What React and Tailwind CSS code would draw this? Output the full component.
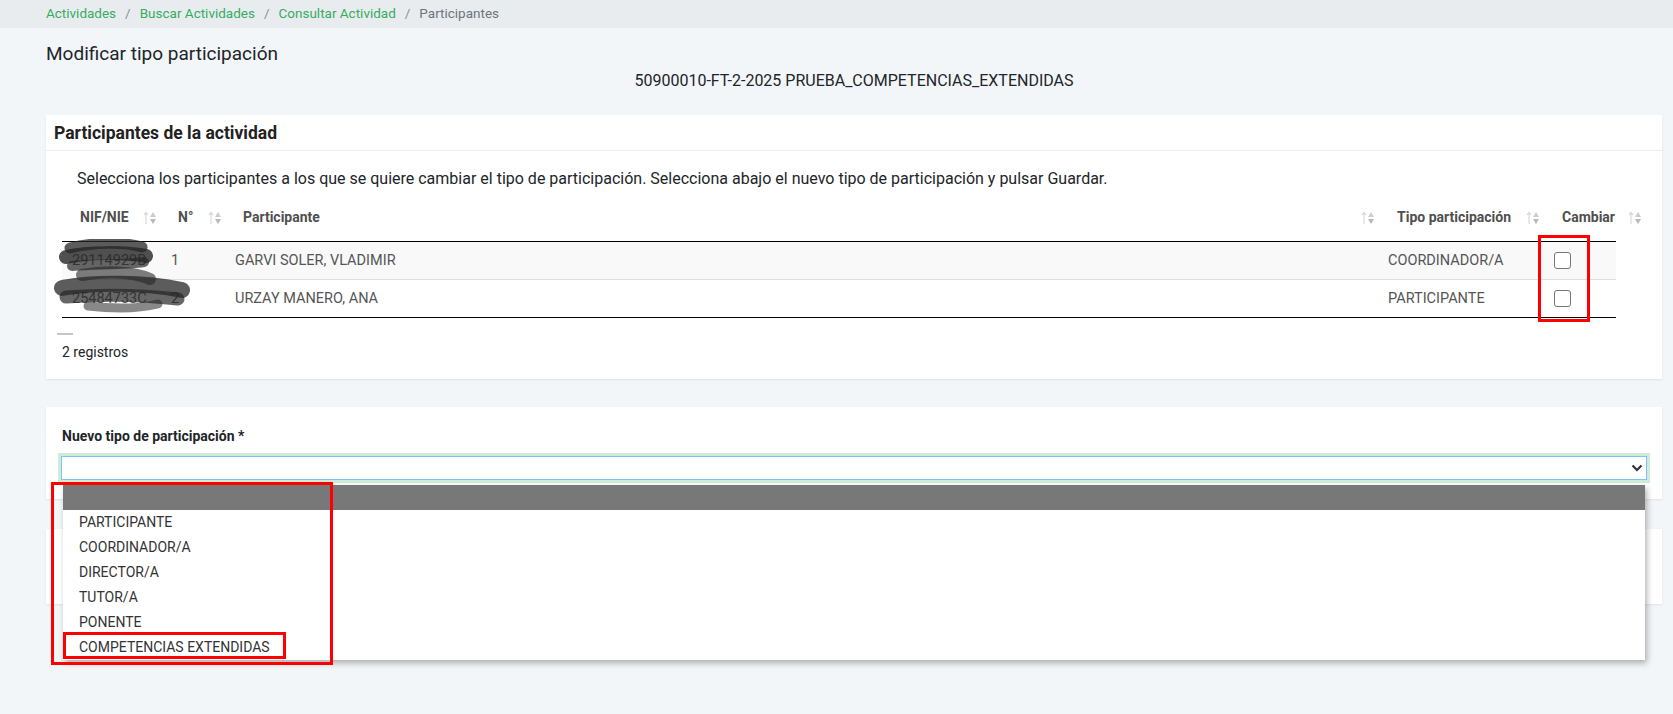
import React from "react";

const SortIcon = () => (
    <svg width="14" height="16" viewBox="0 0 14 16" className="shrink-0">
        <path d="M3 14V2.5M1 5L3 2.3L5 5" stroke="#d6d6d6" strokeWidth="1.1" fill="none" />
        <path d="M7 7H13L10 2Z" fill="#cdcdcd" />
        <path d="M7 9H13L10 14Z" fill="#b9b9b9" />
    </svg>
);

const Checkbox = () => (
    <div className="w-[17px] h-[17px] rounded-[3px] border border-[#767676] bg-white" />
);

const options = ["PARTICIPANTE", "COORDINADOR/A", "DIRECTOR/A", "TUTOR/A", "PONENTE", "COMPETENCIAS EXTENDIDAS"];

const rows = [
    { nif: "29114929B", n: "1", name: "GARVI SOLER, VLADIMIR", tipo: "COORDINADOR/A", striped: true },
    { nif: "25484733C", n: "2", name: "URZAY MANERO, ANA", tipo: "PARTICIPANTE", striped: false },
];

export default function App() {
    return (
        <div className="relative w-full h-[714px] overflow-hidden bg-[#f3f6f9] text-[#212529]" style={{ fontFamily: "Roboto, 'Liberation Sans', sans-serif" }}>
            {/* breadcrumb */}
            <div className="h-[28px] bg-[#e9ecef] pl-[46px] flex items-center text-[13.5px] pb-[1px]">
                <span className="text-[#35ad5f]">Actividades</span>
                <span className="text-[#8a8f94] px-[9px]">/</span>
                <span className="text-[#35ad5f]">Buscar Actividades</span>
                <span className="text-[#8a8f94] px-[9px]">/</span>
                <span className="text-[#35ad5f]">Consultar Actividad</span>
                <span className="text-[#8a8f94] px-[9px]">/</span>
                <span className="text-[#6c757d]">Participantes</span>
            </div>

            <div className="pl-[46px] pr-[11px]">
                <h1 className="pt-[13px] text-[19px] leading-[25px]">Modificar tipo participación</h1>
                <p className="mt-[4px] text-center text-[16px] leading-[21px]">50900010-FT-2-2025 PRUEBA_COMPETENCIAS_EXTENDIDAS</p>

                {/* card 1 */}
                <div className="mt-[24px] bg-white shadow-[0_1px_2px_rgba(0,0,0,0.08)]">
                    <div className="h-[36px] flex items-center pl-[8px] pt-[1px] border-b border-[#eceef0] text-[17.5px] font-bold text-[#222]">
                        Participantes de la actividad
                    </div>
                    <div className="px-[16px] pt-[16px] pb-[17px]">
                        <p className="pl-[15px] text-[16px] leading-[24px] text-[#212529]">
                            Selecciona los participantes a los que se quiere cambiar el tipo de participación. Selecciona abajo el nuevo tipo de participación y pulsar Guardar.
                        </p>
                        <div className="relative w-[1554px]">
                            <div className="flex items-end h-[50px] pb-[13px] text-[14px] font-bold text-[#4f4f4f] w-[1584px]">
                                <div className="w-[99px] flex items-center justify-between pl-[18px] pr-[4px]"><span>NIF/NIE</span><SortIcon /></div>
                                <div className="w-[64px] flex items-center justify-between pl-[17px] pr-[3px]"><span>N°</span><SortIcon /></div>
                                <div className="w-[1153px] flex items-center justify-between pl-[18px] pr-[3px]"><span>Participante</span><SortIcon /></div>
                                <div className="w-[166px] flex items-center justify-between pl-[19px] pr-[4px]"><span>Tipo participación</span><SortIcon /></div>
                                <div className="w-[102px] flex items-center justify-between pl-[18px] pr-[4px]"><span>Cambiar</span><SortIcon /></div>
                            </div>
                            <div className="border-t border-black">
                                {rows.map((r, i) => (
                                    <div key={i} className={`flex items-center h-[38px] text-[14.5px] text-[#555] ${r.striped ? "bg-[#f9f9f9] border-b border-[#dedede]" : "bg-white border-b border-black"}`}>
                                        <div className="w-[99px] pl-[10px]">{r.nif}</div>
                                        <div className="w-[64px] pl-[10px]">{r.n}</div>
                                        <div className="w-[1153px] pl-[10px]">{r.name}</div>
                                        <div className="w-[166px] pl-[10px]">{r.tipo}</div>
                                        <div className="w-[72px] pl-[10px]"><Checkbox /></div>
                                    </div>
                                ))}
                            </div>
                            {/* redaction scribbles */}
                            <svg className="absolute left-[-8px] top-[48px] pointer-events-none" width="150" height="82" viewBox="0 0 150 82">
                                <g stroke="#262626" strokeLinecap="round" strokeLinejoin="round" fill="none">
                                    <path d="M16 9 C40 3 70 3 88 8" strokeWidth="11" opacity="0.75" />
                                    <path d="M12 18 C35 13 70 13 92 17" strokeWidth="14" opacity="0.8" />
                                    <path d="M18 27 C40 25 70 26 90 23" strokeWidth="10" opacity="0.7" />
                                    <path d="M28 36 C50 32 78 32 96 40" strokeWidth="12" opacity="0.6" />
                                    <path d="M8 49 C40 43 90 43 128 51" strokeWidth="16" opacity="0.75" />
                                    <path d="M12 58 C50 55 90 56 124 60" strokeWidth="13" opacity="0.7" />
                                    <path d="M34 67 C60 70 84 70 104 65" strokeWidth="9" opacity="0.55" />
                                </g>
                            </svg>
                        </div>
                        <div className="mt-[15px] ml-[-5px] w-[16px] h-[2px] bg-[#c6c6c6]" />
                        <p className="mt-[7px] text-[14px] leading-[20px] text-[#212529]">2 registros</p>
                    </div>
                </div>

                {/* card 2 */}
                <div className="mt-[28px] bg-white shadow-[0_1px_2px_rgba(0,0,0,0.08)] px-[15px] pt-[19px] pb-[19px]">
                    <p className="text-[14px] leading-[20px] font-bold text-[#212529] pl-[1px]">Nuevo tipo de participación *</p>
                    <div className="mt-[10px] h-[24px] border border-[#80bdff] bg-white shadow-[0_0_0_3px_rgba(40,167,69,0.22)] flex items-center justify-end pr-[3px]">
                        <svg width="12" height="8" viewBox="0 0 12 8">
                            <path d="M1.5 1.5L6 6L10.5 1.5" stroke="#333" strokeWidth="2.2" fill="none" />
                        </svg>
                    </div>
                </div>

                {/* card 3 (behind dropdown) */}
                <div className="mt-[30px] h-[75px] bg-white shadow-[0_1px_2px_rgba(0,0,0,0.08)]" />
            </div>

            {/* open dropdown list */}
            <div className="absolute left-[63px] top-[485px] w-[1582px] bg-white shadow-[2px_3px_6px_rgba(0,0,0,0.3)] text-[14px] text-[#333]">
                <div className="h-[25px] bg-[#787878]" />
                {options.map((o) => (
                    <div key={o} className="h-[25px] flex items-center pl-[16px]">{o}</div>
                ))}
            </div>

            {/* red highlight boxes */}
            <div className="absolute left-[1538px] top-[235px] w-[52px] h-[87px] border-[3px] border-[#ff0000]" />
            <div className="absolute left-[51px] top-[482px] w-[282px] h-[183px] border-[3px] border-[#ff0000]" />
            <div className="absolute left-[63px] top-[632px] w-[223px] h-[27px] border-[3px] border-[#ff0000]" />
        </div>
    );
}
